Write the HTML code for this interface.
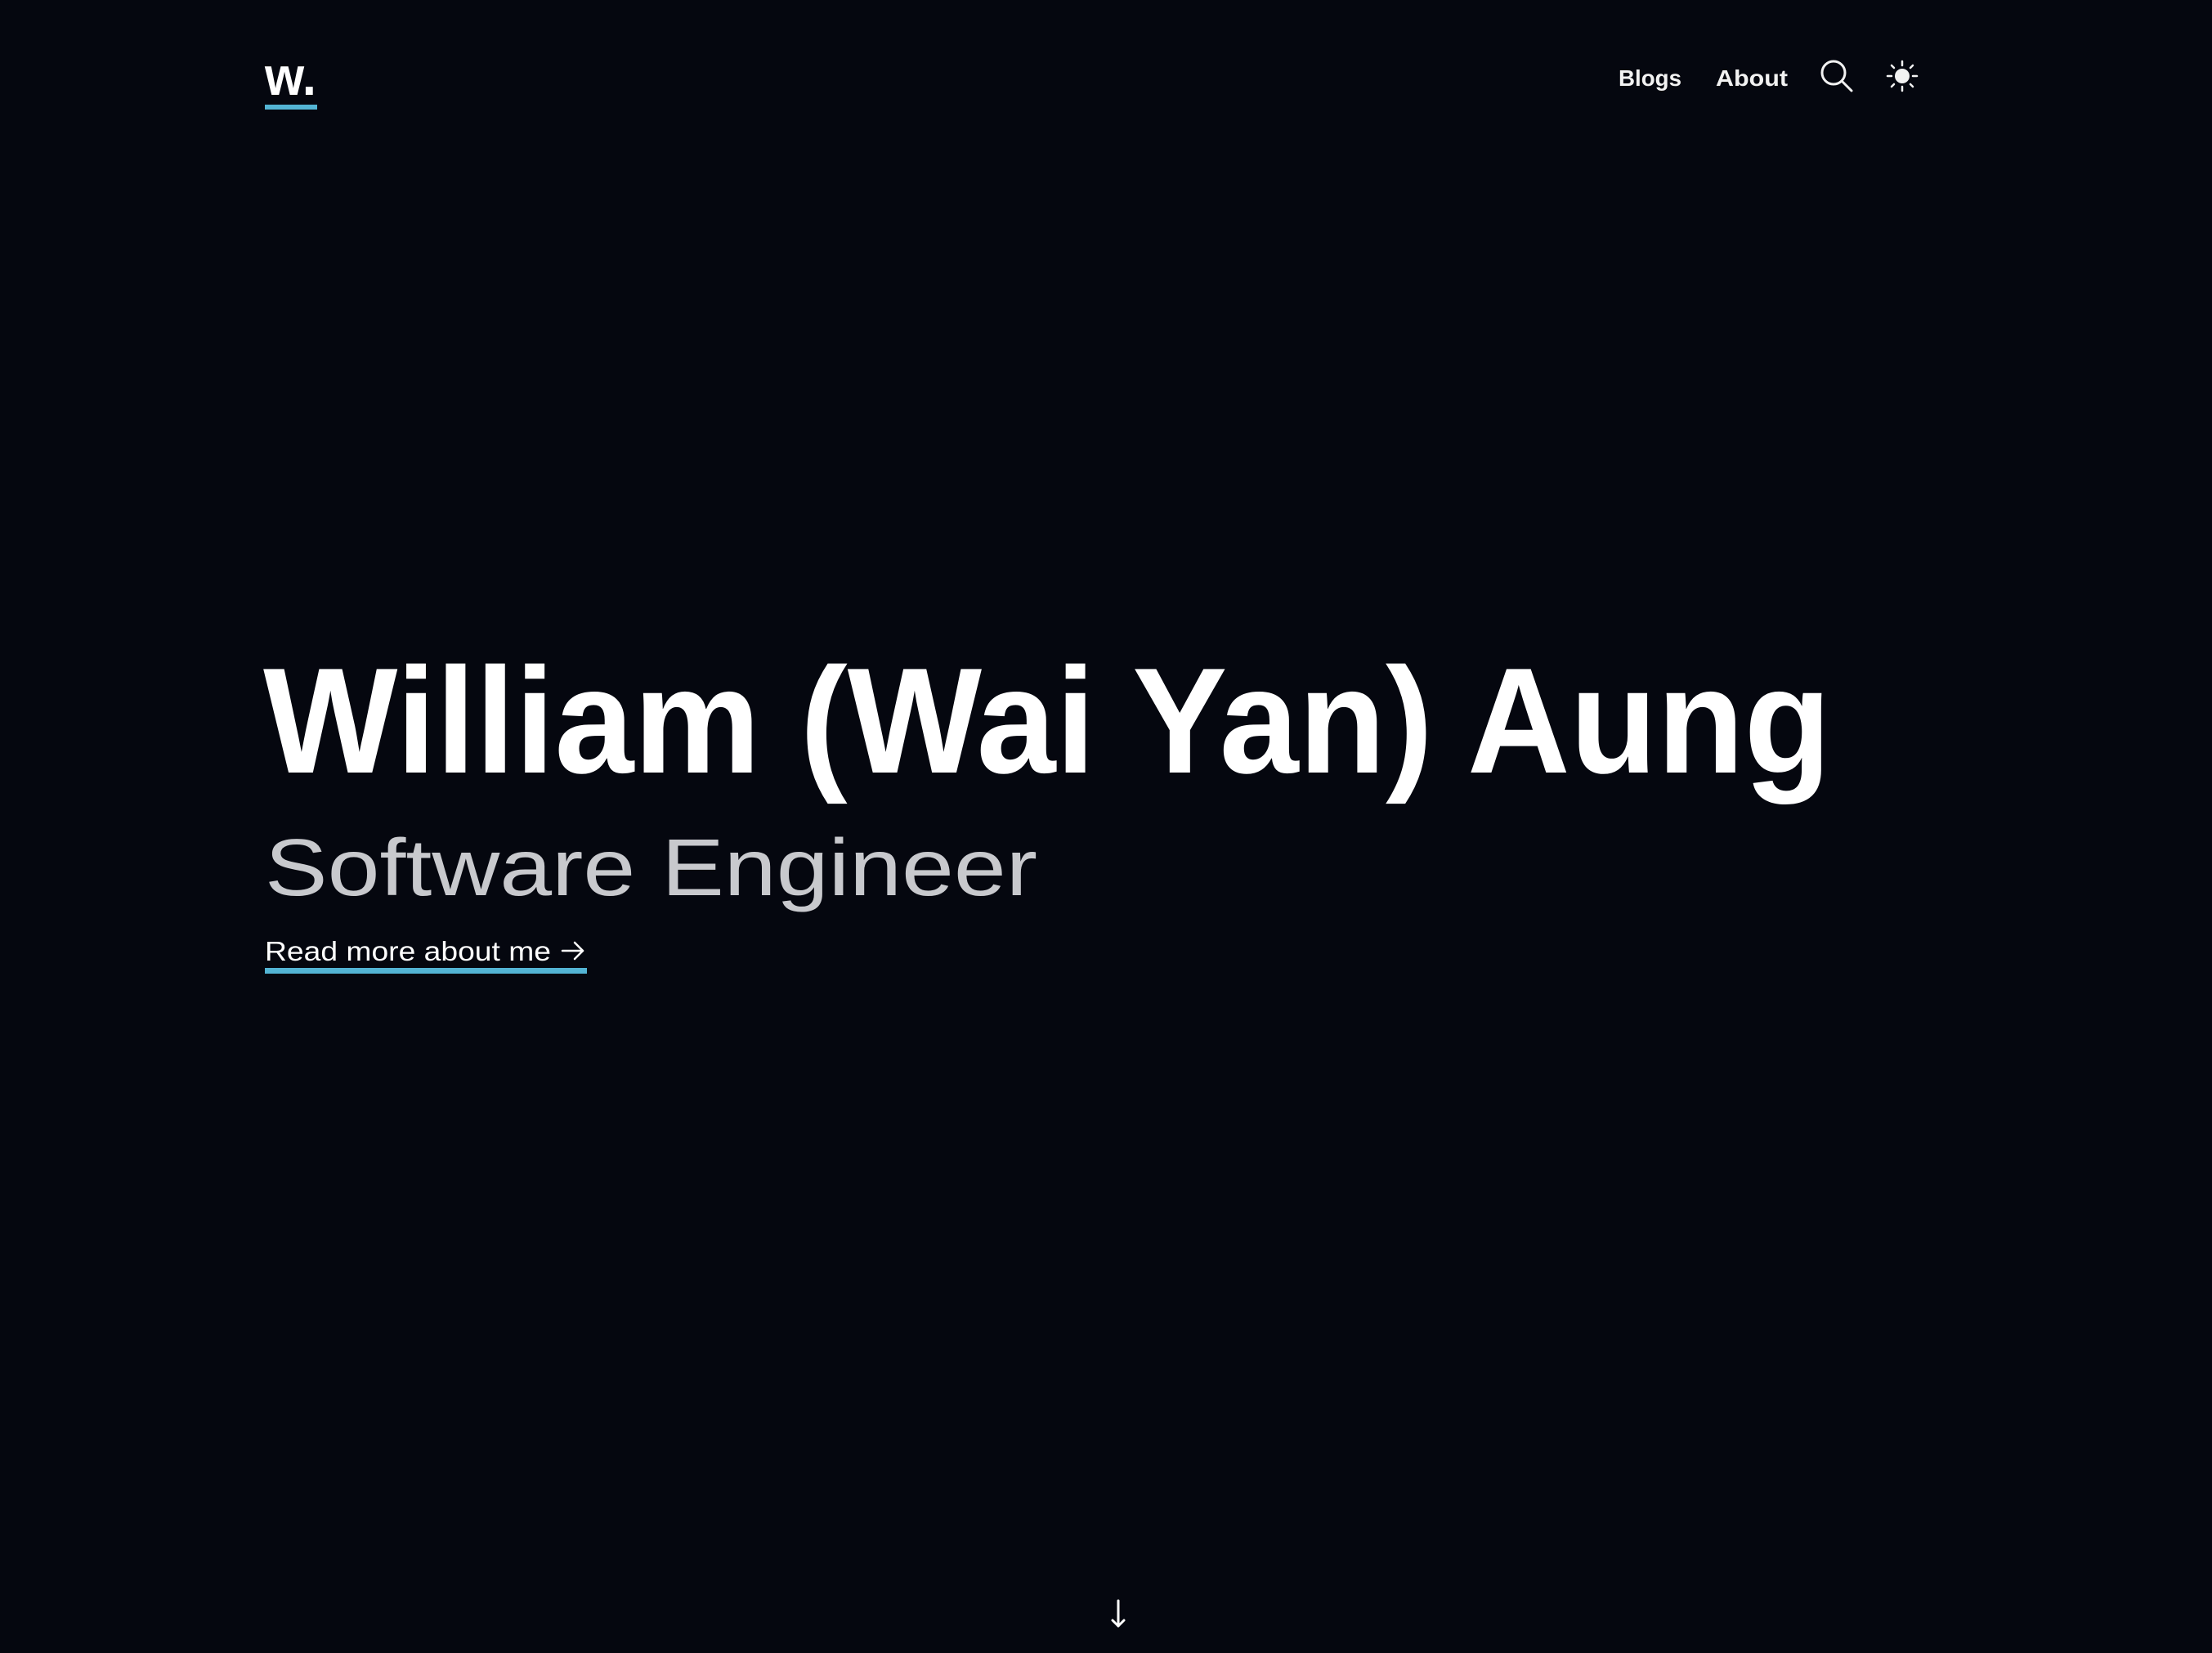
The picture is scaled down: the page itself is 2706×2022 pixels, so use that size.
<!DOCTYPE html>
<html><head><meta charset="utf-8"><style>
html,body{margin:0;padding:0;background:#05070f;width:2706px;height:2022px;overflow:hidden}
svg{display:block}
</style></head><body>
<svg width="2706" height="2022" viewBox="0 0 2706 2022" xmlns="http://www.w3.org/2000/svg" font-family="Liberation Sans, sans-serif">
<rect width="2706" height="2022" fill="#05070f"/>
<text x="324" y="116" font-size="66" font-weight="bold" fill="#fff" textLength="63" lengthAdjust="spacingAndGlyphs">w.</text>
<rect x="324" y="128" width="64" height="6" fill="#53b4d4"/>
<text x="1980" y="105" font-size="28" font-weight="bold" fill="#f2f2f2" textLength="77" lengthAdjust="spacingAndGlyphs">Blogs</text>
<text x="2099" y="105" font-size="28" font-weight="bold" fill="#f2f2f2" textLength="88" lengthAdjust="spacingAndGlyphs">About</text>
<g stroke="#f2f2f2" stroke-width="3" fill="none" stroke-linecap="round">
<circle cx="2243" cy="89" r="14"/>
<line x1="2253" y1="99" x2="2265" y2="111"/>
</g>
<g stroke="#f2f2f2" stroke-width="2.5" stroke-linecap="round">
<circle cx="2327" cy="93" r="9" fill="#f2f2f2" stroke="none"/>
<line x1="2327" y1="75" x2="2327" y2="80"/><line x1="2327" y1="106" x2="2327" y2="111"/>
<line x1="2309" y1="93" x2="2314" y2="93"/><line x1="2340" y1="93" x2="2345" y2="93"/>
<line x1="2314" y1="80" x2="2317" y2="83"/><line x1="2337" y1="103" x2="2340" y2="106"/>
<line x1="2340" y1="80" x2="2337" y2="83"/><line x1="2317" y1="103" x2="2314" y2="106"/>
</g>
<text x="322" y="945" font-size="184" font-weight="bold" fill="#fff" textLength="1918" lengthAdjust="spacingAndGlyphs">William (Wai Yan) Aung</text>
<text x="324" y="1095" font-size="98" fill="#c8c9cd" textLength="945" lengthAdjust="spacingAndGlyphs">Software Engineer</text>
<text x="324" y="1175" font-size="33" fill="#fff" textLength="350" lengthAdjust="spacingAndGlyphs">Read more about me</text>
<g stroke="#fff" stroke-width="2.5" fill="none" stroke-linecap="round" stroke-linejoin="round">
<line x1="688" y1="1163" x2="713" y2="1163"/>
<polyline points="703,1153 713,1163 703,1173"/>
</g>
<rect x="324" y="1184" width="394" height="7" fill="#53b4d4"/>
<g stroke="#fff" stroke-width="3" fill="none" stroke-linecap="round" stroke-linejoin="round">
<line x1="1368" y1="1958" x2="1368" y2="1989"/>
<polyline points="1361,1982 1368,1989 1375,1982"/>
</g>
</svg>
</body></html>
